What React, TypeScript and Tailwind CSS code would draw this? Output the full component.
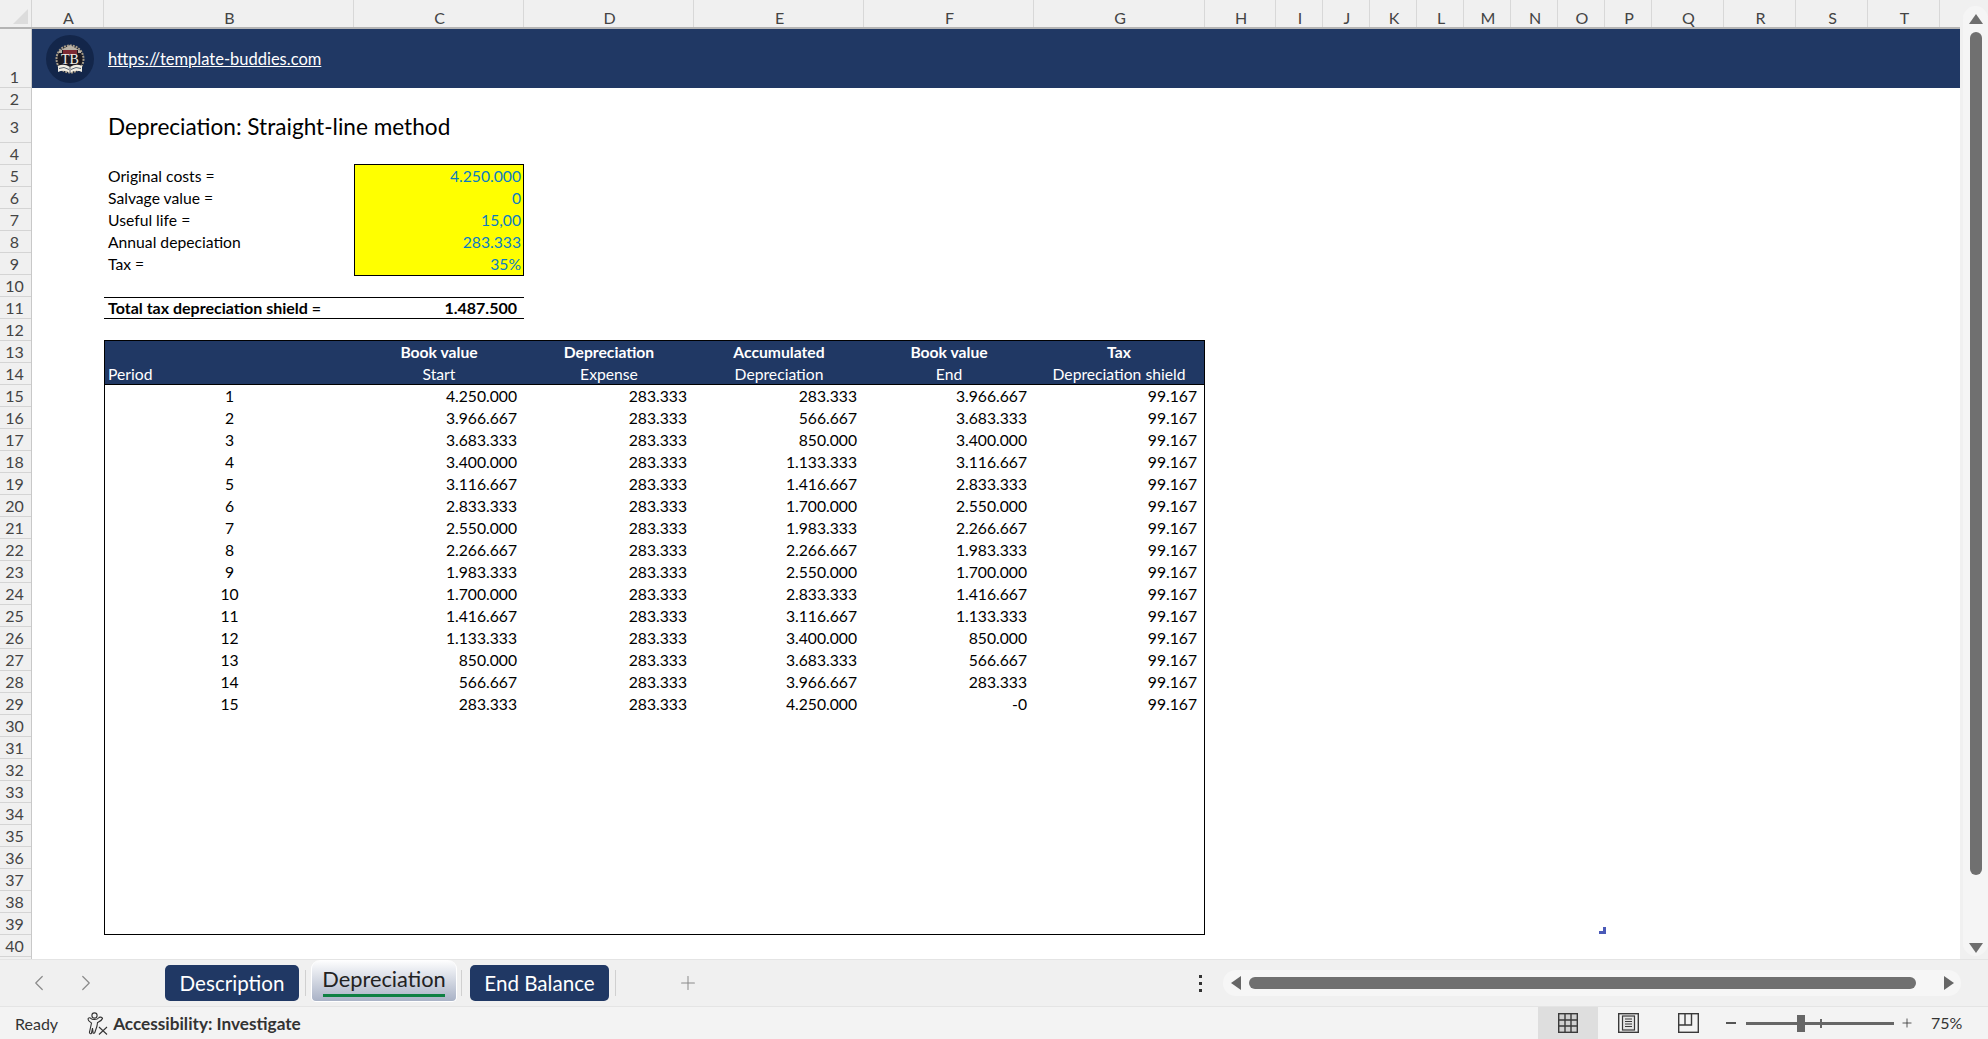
import { ChevronLeft, ChevronRight, Plus } from "lucide-react";

const columns = [
  { label: "A", width: "w-[72px]" },
  { label: "B", width: "w-[250px]" },
  { label: "C", width: "w-[170px]" },
  { label: "D", width: "w-[170px]" },
  { label: "E", width: "w-[170px]" },
  { label: "F", width: "w-[170px]" },
  { label: "G", width: "w-[171px]" },
  { label: "H", width: "w-[71px]" },
  { label: "I", width: "w-[47px]" },
  { label: "J", width: "w-[47px]" },
  { label: "K", width: "w-[47px]" },
  { label: "L", width: "w-[47px]" },
  { label: "M", width: "w-[47px]" },
  { label: "N", width: "w-[47px]" },
  { label: "O", width: "w-[47px]" },
  { label: "P", width: "w-[47px]" },
  { label: "Q", width: "w-[72px]" },
  { label: "R", width: "w-[72px]" },
  { label: "S", width: "w-[72px]" },
  { label: "T", width: "w-[72px]" },
];

const inputs = [
  ["Original costs =", "4.250.000"],
  ["Salvage value =", "0"],
  ["Useful life =", "15,00"],
  ["Annual depeciation", "283.333"],
  ["Tax =", "35%"],
];

const schedule = [
  ["1", "4.250.000", "283.333", "283.333", "3.966.667", "99.167"],
  ["2", "3.966.667", "283.333", "566.667", "3.683.333", "99.167"],
  ["3", "3.683.333", "283.333", "850.000", "3.400.000", "99.167"],
  ["4", "3.400.000", "283.333", "1.133.333", "3.116.667", "99.167"],
  ["5", "3.116.667", "283.333", "1.416.667", "2.833.333", "99.167"],
  ["6", "2.833.333", "283.333", "1.700.000", "2.550.000", "99.167"],
  ["7", "2.550.000", "283.333", "1.983.333", "2.266.667", "99.167"],
  ["8", "2.266.667", "283.333", "2.266.667", "1.983.333", "99.167"],
  ["9", "1.983.333", "283.333", "2.550.000", "1.700.000", "99.167"],
  ["10", "1.700.000", "283.333", "2.833.333", "1.416.667", "99.167"],
  ["11", "1.416.667", "283.333", "3.116.667", "1.133.333", "99.167"],
  ["12", "1.133.333", "283.333", "3.400.000", "850.000", "99.167"],
  ["13", "850.000", "283.333", "3.683.333", "566.667", "99.167"],
  ["14", "566.667", "283.333", "3.966.667", "283.333", "99.167"],
  ["15", "283.333", "283.333", "4.250.000", "-0", "99.167"],
];

const headers = [
  ["Book value", "Start"],
  ["Depreciation", "Expense"],
  ["Accumulated", "Depreciation"],
  ["Book value", "End"],
  ["Tax", "Depreciation shield"],
];

function Logo() {
  return (
    <svg width="48" height="48" viewBox="0 0 48 48">
      <circle cx="24" cy="24" r="24" fill="#13264a" />
      <circle cx="24" cy="24" r="13.5" fill="#1a1a24" stroke="#a89d8a" strokeWidth="2" strokeDasharray="2 1" />
      <path d="M13 16 L24 10 L35 16 L35 18 L13 18 Z" fill="#b9b2a6" />
      <rect x="16" y="15" width="16" height="15" fill="#1d1a24" />
      <rect x="17" y="15" width="14" height="5" fill="#7c2a33" />
      <text x="24" y="29" textAnchor="middle" fontSize="14" fill="#f2efe8" fontFamily="Liberation Serif, serif">
        TB
      </text>
      <path d="M12 31 Q18 28 24 32 Q30 28 36 31 L36 37 Q30 34 24 38 Q18 34 12 37 Z" fill="#f1ede3" />
      <path d="M24 32 L24 38 M13 33.5 Q18 31 23 34.5 M25 34.5 Q30 31 35 33.5" stroke="#1b2a44" strokeWidth="0.7" fill="none" />
    </svg>
  );
}

function AccessibilityIcon() {
  return (
    <svg width="21" height="23" viewBox="0 0 21 23" fill="none" stroke="#333" strokeWidth="1.1">
      <circle cx="7.5" cy="3.5" r="2.6" />
      <path d="M1 7 C1.5 5.5 3 5.5 4 6.5 C5 8 10 8 11.5 6 C12.5 4.5 15 5 15.5 6.5 C15 8.5 12.5 9.5 10.5 10.5 L10 14 L8 20 C7.5 22 5.5 21.5 6 20 L5.5 16 L4.5 21 C4 22.5 2 21.5 2.5 20 L4.5 11 C3 10 1 9 1 7 Z" />
      <path d="M12 15 L20 22.5 M20 15 L12 22.5" />
    </svg>
  );
}

function NormalViewIcon() {
  return (
    <svg width="20" height="20" viewBox="0 0 20 20" fill="#d0d0d0" stroke="#3a3a3a" strokeWidth="1.4">
      <rect x="0.7" y="0.7" width="18.6" height="18.6" />
      <path d="M7 0.7 V19.3 M13 0.7 V19.3 M0.7 7 H19.3 M0.7 13 H19.3" fill="none" />
    </svg>
  );
}

function PageLayoutIcon() {
  return (
    <svg width="21" height="20" viewBox="0 0 21 20" fill="none" stroke="#3a3a3a" strokeWidth="1.2">
      <rect x="0.7" y="0.7" width="19.6" height="18.6" strokeWidth="1.4" />
      <rect x="4.5" y="3" width="12" height="14" fill="#e4e4e4" />
      <path d="M7 6 H14 M7 8.5 H14 M7 11 H14 M7 13.5 H14" />
    </svg>
  );
}

function PageBreakIcon() {
  return (
    <svg width="21" height="20" viewBox="0 0 21 20" fill="none" stroke="#3a3a3a" strokeWidth="1.4">
      <rect x="0.7" y="0.7" width="19.6" height="18.6" />
      <path d="M0.7 12 H13.5 V0.7 M7 0.7 V12" />
    </svg>
  );
}

function SheetTab({ label }: { label: string }) {
  return (
    <div className="flex h-[36px] items-center justify-center rounded-[5px] bg-[#203864] pt-px text-[20.6px] text-white">
      {label}
    </div>
  );
}

export default function App() {
  return (
    <div
      className="relative flex h-[1039px] w-[1988px] flex-col overflow-hidden bg-[#f0f0f0] text-[15.7px] text-black"
      style={{ fontFamily: "Lato, 'Open Sans', sans-serif" }}
    >
      <div className="flex h-[959px] shrink-0">
        <div className="w-[1960px] shrink-0">
          {/* column letters */}
          <div className="flex h-[29px] border-b-2 border-[#b4b4b4]">
            <div className="flex w-[32px] shrink-0 items-end justify-end border-r border-[#d4d4d4] pb-[3px] pr-[3px]">
              <svg width="15" height="15" viewBox="0 0 15 15">
                <polygon points="15,0 15,15 0,15" fill="#dcdcdc" />
              </svg>
            </div>
            {columns.map((c) => (
              <div
                key={c.label}
                className={`${c.width} flex shrink-0 items-center justify-center border-r border-[#d8d8d8] pl-[2px] pt-[8px] text-[16px] text-[#444]`}
              >
                {c.label}
              </div>
            ))}
          </div>

          <div className="flex h-[930px]">
            {/* row numbers */}
            <div className="w-[32px] shrink-0 border-r border-[#c8c8c8] text-[16px] leading-[22px] text-[#444]">
              <div className="flex h-[59px] items-end justify-center border-b border-[#d4d4d4] pr-[2px] leading-[20px]">1</div>
              <div className="flex h-[22px] items-center justify-center border-b border-[#d4d4d4] pr-[2px] pt-[1px]">2</div>
              <div className="flex h-[33px] items-center justify-center border-b border-[#d4d4d4] pr-[2px] pt-[2px]">3</div>
              {Array.from({ length: 37 }, (_, i) => i + 4).map((n) => (
                <div key={n} className="flex h-[22px] items-center justify-center border-b border-[#d4d4d4] pr-[2px] pt-[1px]">
                  {n}
                </div>
              ))}
            </div>

            {/* worksheet */}
            <div className="w-[1928px] bg-white">
              <div className="flex h-[59px] items-center bg-[#203864]">
                <div className="mx-[14px] flex items-center">
                  <Logo />
                </div>
                <a className="pt-px text-[16.5px] text-white underline" href="#top">
                  https://template-buddies.com
                </a>
              </div>
              <div className="h-[22px]" />
              <div className="flex h-[33px] items-center pl-[76px] pt-px text-[22.6px]">Depreciation: Straight-line method</div>
              <div className="h-[21px]" />

              <div className="ml-[72px] w-[420px]">
                {inputs.map(([label, value], i) => (
                  <div
                    key={label}
                    className={`grid grid-cols-[250px_170px] leading-[22px] ${i === 0 ? "h-[23px]" : "h-[22px]"}`}
                  >
                    <div className={`pl-[4px] ${i === 0 ? "pt-px" : ""}`}>{label}</div>
                    <div
                      className={`border-x border-black bg-[#ffff00] pr-[2px] text-right text-[#0b7dc2] ${
                        i === 0 ? "border-t" : ""
                      } ${i === inputs.length - 1 ? "border-b" : ""}`}
                    >
                      {value}
                    </div>
                  </div>
                ))}
                <div className="h-[22px]" />
                <div className="flex h-[22px] items-center justify-between border-y border-black pl-[4px] pr-[7px] text-[16px] font-bold">
                  <span>Total tax depreciation shield =</span>
                  <span>1.487.500</span>
                </div>
                <div className="h-[21px]" />
              </div>

              {/* depreciation schedule */}
              <div className="ml-[72px] h-[595px] w-[1101px] border border-black">
                <div className="bg-[#203864] text-white">
                  <div className="grid h-[21px] grid-cols-[249px_170px_170px_170px_170px_170px] font-bold leading-[22px]">
                    <div />
                    {headers.map((h, i) => (
                      <div key={i} className="text-center">
                        {h[0]}
                      </div>
                    ))}
                  </div>
                  <div className="grid h-[22px] grid-cols-[249px_170px_170px_170px_170px_170px] leading-[24px]">
                    <div className="pl-[3px]">Period</div>
                    {headers.map((h, i) => (
                      <div key={i} className="text-center">
                        {h[1]}
                      </div>
                    ))}
                  </div>
                </div>
                <div className="border-t border-black">
                  {schedule.map((row) => (
                    <div
                      key={row[0]}
                      className="grid h-[22px] grid-cols-[249px_170px_170px_170px_170px_170px] leading-[22px]"
                    >
                      <div className="text-center">{row[0]}</div>
                      {row.slice(1).map((v, i) => (
                        <div key={i} className="pr-[7px] text-right">
                          {v}
                        </div>
                      ))}
                    </div>
                  ))}
                </div>
              </div>
            </div>
          </div>
        </div>

        {/* vertical scrollbar */}
        <div className="w-[28px] shrink-0 pl-[3px] pt-[6px]">
          <div className="flex h-[950px] flex-col items-center rounded-[13px] bg-[#f5f5f5] pt-[8px]">
            <svg width="14" height="10" viewBox="0 0 14 10">
              <polygon points="7,0 14,10 0,10" fill="#6e6e6e" />
            </svg>
            <div className="mt-[8px] h-[843px] w-[12px] shrink-0 rounded-[6px] bg-[#707070]" />
            <svg className="mt-[68px] shrink-0" width="14" height="10" viewBox="0 0 14 10">
              <polygon points="0,0 14,0 7,10" fill="#6e6e6e" />
            </svg>
          </div>
        </div>
      </div>

      {/* sheet tabs */}
      <div className="flex h-[48px] shrink-0 items-center border-y border-[#e4e4e4]">
        <div className="flex w-[165px] items-center gap-[21px] pl-[26px] text-[#8a8a8a]">
          <ChevronLeft size={26} strokeWidth={1.1} />
          <ChevronRight size={26} strokeWidth={1.1} />
        </div>
        <div className="w-[134px]">
          <SheetTab label="Description" />
        </div>
        <div className="ml-[6px] h-[26px] w-px bg-[#d0d0d0]" />
        <div className="ml-[5px] flex h-[42px] w-[146px] flex-col items-center self-start rounded-b-[5px] rounded-t-[9px] border border-t-0 border-white bg-gradient-to-b from-white to-[#a9b2c6] pt-[5px] text-[21.8px] text-[#222]">
          <span className="leading-[28px]">Depreciation</span>
          <div className="mt-[1px] h-[3px] w-[122px] bg-[#0e8043]" />
        </div>
        <div className="ml-[4px] h-[26px] w-px bg-[#d0d0d0]" />
        <div className="ml-[8px] w-[139px]">
          <SheetTab label="End Balance" />
        </div>
        <div className="ml-[6px] h-[26px] w-px bg-[#d0d0d0]" />
        <div className="ml-[61px] text-[#8a8a8a]">
          <Plus size={22} strokeWidth={1.1} />
        </div>
        <div className="ml-[500px] flex flex-col gap-[4px]">
          <div className="h-[3px] w-[3px] bg-[#333]" />
          <div className="h-[3px] w-[3px] bg-[#333]" />
          <div className="h-[3px] w-[3px] bg-[#333]" />
        </div>
        <div className="ml-[21px] flex h-[26px] w-[738px] items-center rounded-[13px] bg-[#f6f6f6] pl-[8px] pr-[7px]">
          <svg width="10" height="14" viewBox="0 0 10 14">
            <polygon points="10,0 10,14 0,7" fill="#666" />
          </svg>
          <div className="ml-[8px] h-[12px] w-[667px] rounded-[6px] bg-[#707070]" />
          <svg className="ml-auto" width="10" height="14" viewBox="0 0 10 14">
            <polygon points="0,0 10,7 0,14" fill="#666" />
          </svg>
        </div>
      </div>

      {/* status bar */}
      <div className="flex h-[32px] shrink-0 items-center bg-[#f3f3f3] text-[16px] text-[#333]">
        <span className="ml-[15px] pt-px">Ready</span>
        <span className="ml-[29px]">
          <AccessibilityIcon />
        </span>
        <span className="ml-[5px] pt-px text-[17.2px] font-bold">Accessibility: Investigate</span>
        <div className="ml-auto flex h-full w-[450px] items-center">
          <div className="flex h-full w-[60px] items-center justify-center bg-[#dedede]">
            <NormalViewIcon />
          </div>
          <div className="flex w-[60px] justify-center">
            <PageLayoutIcon />
          </div>
          <div className="flex w-[60px] justify-center">
            <PageBreakIcon />
          </div>
          <div className="ml-[8px] h-[1.5px] w-[10px] bg-[#555]" />
          <div className="relative ml-[10px] h-[3px] w-[148px] bg-[#666]">
            <div className="absolute left-[51px] top-[-7px] h-[17px] w-[8px] bg-[#666]" />
            <div className="absolute left-[74px] top-[-3px] h-[9px] w-[1.5px] bg-[#666]" />
          </div>
          <Plus className="ml-[6px]" size={14} strokeWidth={1.4} />
          <span className="ml-[17px]">75%</span>
        </div>
      </div>

      {/* stray selection mark */}
      <svg className="absolute left-[1599px] top-[927px]" width="7" height="7" viewBox="0 0 7 7">
        <polygon points="4,0 7,0 7,7 0,7 0,4 4,4" fill="#4a5ab8" />
      </svg>
    </div>
  );
}
